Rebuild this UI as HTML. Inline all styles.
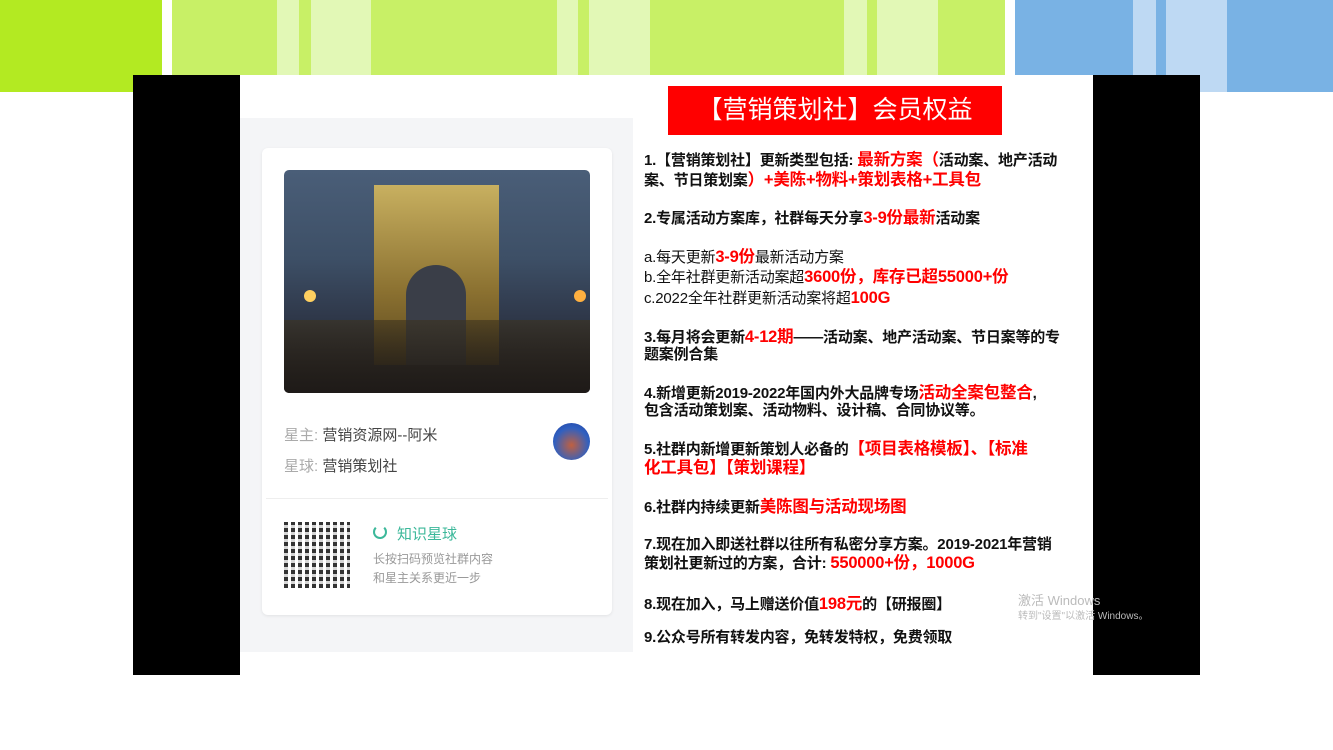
<!DOCTYPE html>
<html><head><meta charset="utf-8"><style>
body{margin:0;width:1333px;height:750px;position:relative;overflow:hidden;background:#fff;font-family:"Liberation Sans","Noto Sans CJK SC",sans-serif}
.a{position:absolute}
.t{position:absolute;left:644px;font-size:15px;font-weight:bold;color:#111;white-space:nowrap;line-height:18px;letter-spacing:-0.2px}
.r{color:#f00;font-size:16.5px}
.n{font-weight:normal}
</style></head><body>
<div class="a" style="left:0;top:0;width:162px;height:92px;background:#b3ea22"></div>
<div class="a" style="left:172px;top:0;width:833px;height:75px;background:#c8f066"></div>
<div class="a" style="left:277px;top:0;width:22px;height:75px;background:#e2f8b6"></div>
<div class="a" style="left:311px;top:0;width:60px;height:75px;background:#e2f8b6"></div>
<div class="a" style="left:557px;top:0;width:21px;height:75px;background:#e2f8b6"></div>
<div class="a" style="left:589px;top:0;width:61px;height:75px;background:#e2f8b6"></div>
<div class="a" style="left:844px;top:0;width:23px;height:75px;background:#e2f8b6"></div>
<div class="a" style="left:877px;top:0;width:61px;height:75px;background:#e2f8b6"></div>
<div class="a" style="left:1015px;top:0;width:318px;height:92px;background:#79b2e4"></div>
<div class="a" style="left:1133px;top:0;width:23px;height:92px;background:#bed9f3"></div>
<div class="a" style="left:1166px;top:0;width:61px;height:92px;background:#bed9f3"></div>
<div class="a" style="left:133px;top:75px;width:1067px;height:600px;background:#000"></div>
<div class="a" style="left:240px;top:75px;width:853px;height:600px;background:#fff"></div>
<div class="a" style="left:240px;top:118px;width:393px;height:534px;background:#f4f5f7"></div>
<div class="a" style="left:262px;top:148px;width:350px;height:467px;background:#fff;border-radius:6px;box-shadow:0 1px 3px rgba(0,0,0,.08)"></div>
<div class="a" style="left:284px;top:170px;width:306px;height:223px;border-radius:5px;overflow:hidden;background:linear-gradient(180deg,#4a5e78 0%,#3d4f66 40%,#2a3040 75%,#1a1a22 100%)">
<div class="a" style="left:90px;top:15px;width:125px;height:180px;background:linear-gradient(180deg,#c8b060,#8a7030 60%,#5a4820)"></div>
<div class="a" style="left:122px;top:95px;width:60px;height:100px;border-radius:30px 30px 0 0;background:#3a3e48"></div>
<div class="a" style="left:0;top:150px;width:306px;height:73px;background:linear-gradient(180deg,rgba(60,50,30,.6),#1e1a18)"></div>
<div class="a" style="left:20px;top:120px;width:12px;height:12px;border-radius:6px;background:#ffd060"></div>
<div class="a" style="left:290px;top:120px;width:12px;height:12px;border-radius:6px;background:#ffb040"></div>
</div>
<div class="a" style="left:284px;top:424px;font-size:15px;color:#aaa">星主: <span style="color:#444">营销资源网--阿米</span></div>
<div class="a" style="left:284px;top:455px;font-size:15px;color:#aaa">星球: <span style="color:#444">营销策划社</span></div>
<div class="a" style="left:553px;top:423px;width:37px;height:37px;border-radius:50%;background:radial-gradient(circle at 50% 60%,#c06040,#3060c0 60%,#2040a0)"></div>
<div class="a" style="left:266px;top:498px;width:342px;height:1px;background:#eee"></div>
<div class="a" style="left:284px;top:522px;width:66px;height:66px;background:repeating-linear-gradient(90deg,#111 0 4px,#fff 4px 7px),#111;opacity:.85"></div>
<div class="a" style="left:284px;top:522px;width:66px;height:66px;background:repeating-linear-gradient(0deg,transparent 0 4px,rgba(255,255,255,.8) 4px 7px)"></div>
<div class="a" style="left:373px;top:525px;width:10px;height:10px;border:2px solid #3cb89a;border-radius:50%;border-top-color:transparent"></div>
<div class="a" style="left:397px;top:523px;font-size:15px;color:#3cb89a">知识星球</div>
<div class="a" style="left:373px;top:550px;font-size:12px;color:#999">长按扫码预览社群内容</div>
<div class="a" style="left:373px;top:569px;font-size:12px;color:#999">和星主关系更近一步</div>
<div class="a" style="left:668px;top:86px;width:334px;height:49px;background:#f00;color:#fff;font-size:25px;line-height:49px;text-align:center">【营销策划社】会员权益</div>
<div class="t" style="top:151px">1.【营销策划社】更新类型包括: <span class="r">最新方案（</span>活动案、地产活动</div>
<div class="t" style="top:171px">案、节日策划案<span class="r">）+美陈+物料+策划表格+工具包</span></div>
<div class="t" style="top:209px">2.专属活动方案库，社群每天分享<span class="r">3-9份最新</span>活动案</div>
<div class="t n" style="top:248px">a.每天更新<b class="r">3-9份</b>最新活动方案</div>
<div class="t n" style="top:268px">b.全年社群更新活动案超<b class="r">3600份，库存已超55000+份</b></div>
<div class="t n" style="top:289px">c.2022全年社群更新活动案将超<b class="r">100G</b></div>
<div class="t" style="top:328px">3.每月将会更新<span class="r">4-12期</span>——活动案、地产活动案、节日案等的专</div>
<div class="t" style="top:346px">题案例合集</div>
<div class="t" style="top:384px">4.新增更新2019-2022年国内外大品牌专场<span class="r">活动全案包整合</span>,</div>
<div class="t" style="top:402px">包含活动策划案、活动物料、设计稿、合同协议等。</div>
<div class="t" style="top:440px">5.社群内新增更新策划人必备的<span class="r">【项目表格模板】、【标准</span></div>
<div class="t" style="top:459px"><span class="r">化工具包】【策划课程】</span></div>
<div class="t" style="top:498px">6.社群内持续更新<span class="r">美陈图与活动现场图</span></div>
<div class="t" style="top:536px">7.现在加入即送社群以往所有私密分享方案。2019-2021年营销</div>
<div class="t" style="top:554px">策划社更新过的方案，合计: <span class="r">550000+份，1000G</span></div>
<div class="t" style="top:595px">8.现在加入，马上赠送价值<span class="r">198元</span>的【研报圈】</div>
<div class="t" style="top:629px">9.公众号所有转发内容，免转发特权，免费领取</div>
<div class="a" style="left:1018px;top:590px;font-size:13px;color:#bbb">激活 Windows</div>
<div class="a" style="left:1018px;top:607px;font-size:10px;color:#bbb">转到"设置"以激活 Windows。</div>
</body></html>
